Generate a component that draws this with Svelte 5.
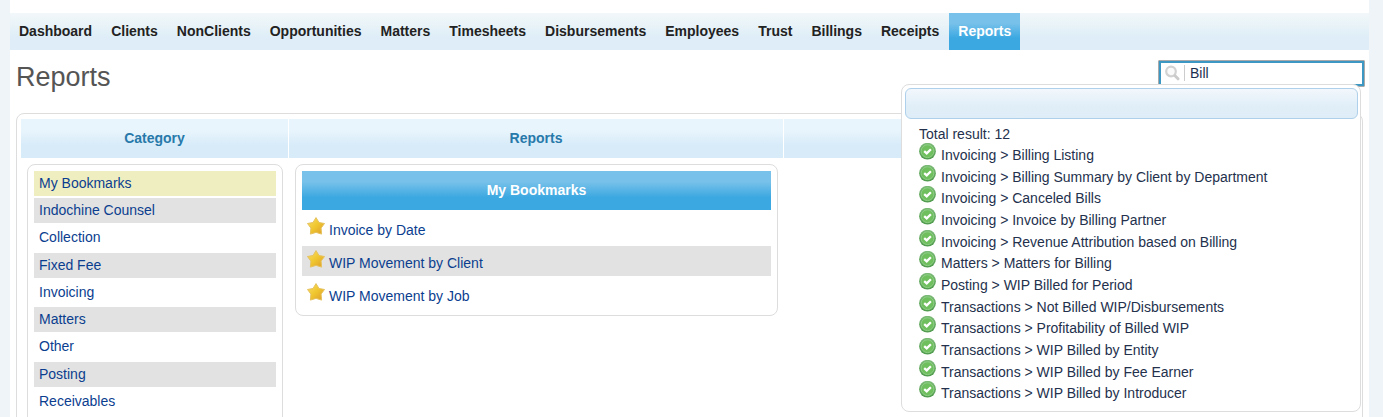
<script lang="ts">
	const tabs = [
		'Dashboard',
		'Clients',
		'NonClients',
		'Opportunities',
		'Matters',
		'Timesheets',
		'Disbursements',
		'Employees',
		'Trust',
		'Billings',
		'Receipts',
		'Reports',
	];

	const categories = [
		'My Bookmarks',
		'Indochine Counsel',
		'Collection',
		'Fixed Fee',
		'Invoicing',
		'Matters',
		'Other',
		'Posting',
		'Receivables',
	];

	const bookmarks = ['Invoice by Date', 'WIP Movement by Client', 'WIP Movement by Job'];

	const results = [
		'Invoicing > Billing Listing',
		'Invoicing > Billing Summary by Client by Department',
		'Invoicing > Canceled Bills',
		'Invoicing > Invoice by Billing Partner',
		'Invoicing > Revenue Attribution based on Billing',
		'Matters > Matters for Billing',
		'Posting > WIP Billed for Period',
		'Transactions > Not Billed WIP/Disbursements',
		'Transactions > Profitability of Billed WIP',
		'Transactions > WIP Billed by Entity',
		'Transactions > WIP Billed by Fee Earner',
		'Transactions > WIP Billed by Introducer',
	];

	let activeTab = $state('Reports');
	let activeCategory = $state('My Bookmarks');
	let query = $state('Bill');
</script>

<!-- Gradients shared by every star and tick -->
<svg class="defs" aria-hidden="true">
	<defs>
		<linearGradient id="gold" x1="0" y1="0" x2="1" y2="1">
			<stop offset="0" stop-color="#f7e06a" />
			<stop offset="0.5" stop-color="#f0c62e" />
			<stop offset="1" stop-color="#dc9a2c" />
		</linearGradient>
		<linearGradient id="green" x1="0" y1="0" x2="0" y2="1">
			<stop offset="0" stop-color="#7dbb78" />
			<stop offset="1" stop-color="#4f9a4c" />
		</linearGradient>
	</defs>
</svg>

<div class="page">
	<nav>
		{#each tabs as tab (tab)}
			<a href="#{tab}" class:active={tab === activeTab} onclick={() => (activeTab = tab)}>{tab}</a>
		{/each}
	</nav>

	<header>
		<h1>Reports</h1>
		<div class="search">
			<label class="box">
				<svg width="16" height="16" viewBox="0 0 16 16" role="img" aria-label="Search reports">
					<circle cx="7" cy="6.5" r="4.8" fill="#fafafa" stroke="#d2d2d2" stroke-width="2.2" />
					<path d="M11 10.8l3 3" stroke="#cbcbcb" stroke-width="3" stroke-linecap="round" />
				</svg>
				<input type="text" bind:value={query} />
			</label>
			<div class="popup">
				<div class="bar"></div>
				<p>Total result: {results.length}</p>
				<ul>
					{#each results as result (result)}
						<li>
							<svg width="18" height="18" viewBox="0 0 18 18" aria-hidden="true">
								<circle cx="8.5" cy="8.2" r="8.4" fill="url(#green)" />
								<circle cx="8.5" cy="8.2" r="6.4" fill="#6fbf5f" stroke="#8fcf86" />
								<path d="M5.2 8.2l2.5 2.2 4.2-4.2" fill="none" stroke="#fff" stroke-width="2.3" />
							</svg>
							<span>{result}</span>
						</li>
					{/each}
				</ul>
			</div>
		</div>
	</header>

	<main>
		<section>
			<h2>Category</h2>
			<ul class="panel categories">
				{#each categories as category (category)}
					<li class:selected={category === activeCategory}>
						<a href="#{category}" onclick={() => (activeCategory = category)}>{category}</a>
					</li>
				{/each}
			</ul>
		</section>
		<section>
			<h2>Reports</h2>
			<div class="panel">
				<h3>{activeCategory}</h3>
				<ul class="reports">
					{#each bookmarks as report (report)}
						<li>
							<svg width="20" height="20" viewBox="0 0 20 20" aria-hidden="true">
								<path
									d="M10 1.6l3 4.9 5.5 1-3.4 4.6.5 6L10 16.4l-5.6 1.7.5-6-3.4-4.6 5.5-1z"
									fill="url(#gold)"
									stroke="#e6c25e"
									stroke-width="1"
									stroke-linejoin="round"
								/>
							</svg>
							<a href="#{report}">{report}</a>
						</li>
					{/each}
				</ul>
			</div>
		</section>
		<section>
			<h2></h2>
		</section>
	</main>
</div>

<style>
	:global(body) {
		background: #eff4f8;
	}
	.defs {
		position: absolute;
		width: 0;
		height: 0;
	}
	.page {
		box-sizing: border-box;
		height: 100vh;
		margin: 0 14px 0 10px;
		padding-top: 13px;
		overflow: hidden;
		background: #fff;
		font: 14px/16px 'Liberation Sans', Arial, sans-serif;
		color: #222;
	}
	ul {
		margin: 0;
		padding: 0;
		list-style: none;
	}
	h1,
	h2,
	h3,
	p {
		margin: 0;
	}
	a {
		color: #0b3e8f;
		text-decoration: none;
	}
	svg {
		flex-shrink: 0;
	}

	nav {
		display: flex;
		gap: 1px;
		height: 37px;
		background: linear-gradient(#f2f7fa, #e8f3f8 35%, #deedf7 65%);
	}
	nav a {
		padding: 0 9px;
		font-weight: bold;
		line-height: 37px;
		color: #222;
	}
	nav a.active {
		background: linear-gradient(#77c1ea 28%, #3ba8e1 68%);
		color: #fff;
	}

	header {
		display: flex;
		justify-content: space-between;
		height: 63px;
		padding: 0 4px 0 6px;
	}
	h1 {
		font-size: 27px;
		font-weight: normal;
		line-height: 54px;
		color: #555;
	}
	.search {
		position: relative;
		padding-top: 10px;
	}
	.box {
		box-sizing: border-box;
		display: flex;
		align-items: center;
		width: 207px;
		height: 27px;
		padding: 0 4px 2px 5px;
		border: 1px solid #aaa;
		border-radius: 1px;
		box-shadow: inset 0 0 0 2px #3c97c2;
	}
	.box input {
		flex: 1;
		min-width: 0;
		height: 16px;
		margin-left: 4px;
		padding: 0 5px;
		border: 0;
		border-left: 1px solid #ccc;
		outline: 0;
		background: none;
		font: inherit;
		color: #1c2e50;
	}

	.popup {
		position: absolute;
		top: 34px;
		right: 4px;
		box-sizing: border-box;
		width: 460px;
		padding: 3px 2px 3px 3px;
		border: 1px solid #ddd;
		border-radius: 8px;
		background: #fff;
		color: #24314d;
	}
	.bar {
		height: 29px;
		border: 1px solid #aed0ea;
		border-radius: 6px;
		background: linear-gradient(#f2f7fc, #e0eef8 60%, #deedf7);
	}
	.popup p {
		padding: 7px 14px 1px;
	}
	.popup ul {
		display: grid;
		grid-template-rows: repeat(12, minmax(0, 1fr));
		height: 260px;
		padding: 0 14px 5px;
	}
	.popup li {
		display: flex;
		align-items: flex-start;
		gap: 4px;
	}
	.popup span {
		line-height: 24px;
	}

	main {
		display: grid;
		grid-template-columns: 20fr 37fr 43fr;
		gap: 1px;
		margin: 0 6px;
		padding: 5px 4px;
		border: 1px solid #ddd;
		border-radius: 8px;
	}
	h2,
	h3 {
		height: 39px;
		font-size: 14px;
		line-height: 39px;
		text-align: center;
	}
	h2 {
		background: linear-gradient(#e9f5fc 28%, #d7ebf9 68%);
		color: #2779aa;
	}
	h3 {
		background: linear-gradient(#77c1ea 28%, #3ba8e1 68%);
		color: #fff;
	}
	.panel {
		margin: 6px 5px 6px 6px;
		padding: 6px;
		border: 1px solid #ddd;
		border-radius: 8px;
	}
	.categories {
		display: grid;
		grid-auto-rows: 1fr;
		gap: 2px;
		height: 243px;
		padding-bottom: 24px;
	}
	.categories a {
		display: block;
		padding: 0 5px;
		line-height: 25px;
	}
	li {
		white-space: nowrap;
	}
	.categories li:nth-child(even),
	.reports li:nth-child(even) {
		background: #e2e2e2;
	}
	.categories li.selected {
		background: #efeec1;
	}
	.reports {
		display: grid;
		gap: 3px;
		padding-top: 3px;
	}
	.reports li {
		display: flex;
		align-items: flex-start;
		gap: 3px;
		height: 27px;
		padding: 3px 4px 0;
	}
	.reports a {
		line-height: 28px;
	}
</style>
